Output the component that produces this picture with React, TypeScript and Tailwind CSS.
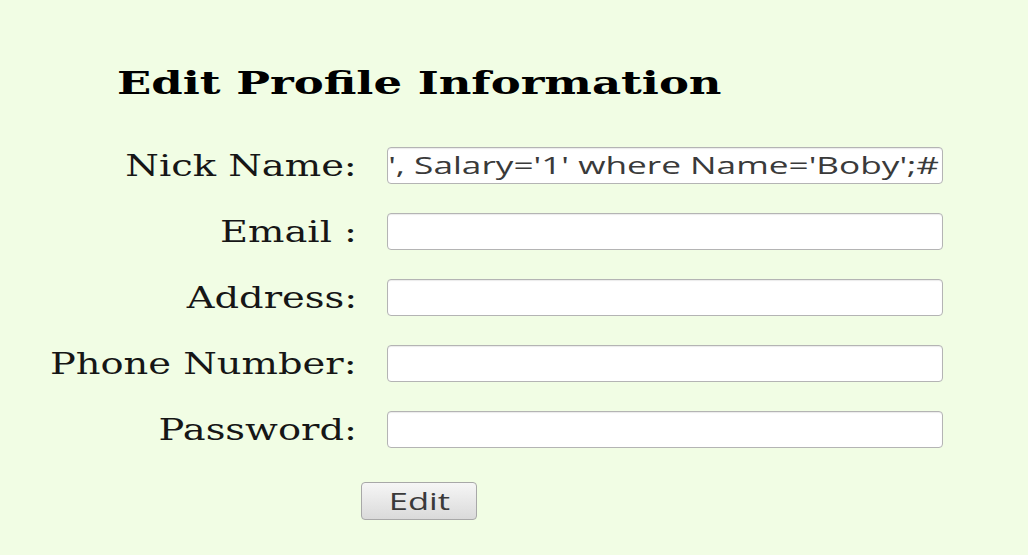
export default function App() {
  const fields = ["Email :", "Address:", "Phone Number:", "Password:"];

  return (
    <div className="min-h-[555px] w-full bg-[#f1fde4] pl-[52px] pt-[63px]">
      <h1 className="ml-[65px] font-['DejaVu_Serif',serif] text-[31px] font-bold leading-[40px] text-black">
        <span className="inline-block origin-left scale-x-[1.45]">Edit Profile Information</span>
      </h1>

      <div className="mt-[44px] grid grid-cols-[305px_556px] items-center gap-x-[30px] gap-y-[29px] font-['DejaVu_Serif',serif] text-[30px] leading-[37px] text-[#161616]">
        <label className="text-right">
          <span className="inline-block origin-right scale-x-[1.28]">Nick Name:</span>
        </label>
        <div className="flex h-[37px] items-center justify-end overflow-hidden whitespace-nowrap rounded-[4px] border border-[#b4b4b4] bg-white px-[3px] font-['Open_Sans',sans-serif] text-[23px] text-[#3a3a3a] shadow-[inset_0_1px_1px_rgba(0,0,0,0.08)]">
          <span className="inline-block origin-right scale-x-[1.53]">
            &apos;, Salary=&apos;1&apos; where Name=&apos;Boby&apos;;#
          </span>
        </div>

        {fields.map((f) => (
          <>
            <label key={f} className="text-right">
              <span className="inline-block origin-right scale-x-[1.28]">{f}</span>
            </label>
            <div className="h-[37px] rounded-[4px] border border-[#b4b4b4] bg-white shadow-[inset_0_1px_1px_rgba(0,0,0,0.08)]" />
          </>
        ))}
      </div>

      <button className="ml-[309px] mt-[34px] h-[38px] w-[116px] rounded-[4px] border border-[#a8a8a8] bg-[linear-gradient(#f6f6f6,#dadada)] font-['Open_Sans',sans-serif] text-[23px] leading-[36px] text-[#3a3a3a]">
        <span className="inline-block scale-x-[1.5]">Edit</span>
      </button>
    </div>
  );
}
